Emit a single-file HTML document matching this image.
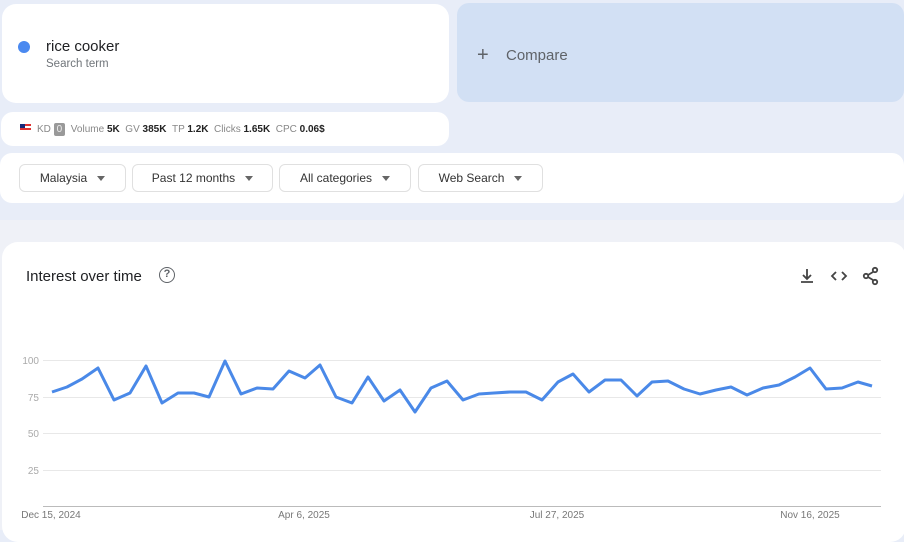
<!DOCTYPE html>
<html><head><meta charset="utf-8"><style>
*{box-sizing:border-box;margin:0;padding:0}
body{width:904px;height:530px;overflow:hidden;background:linear-gradient(#e8edf8 0,#e8edf8 220px,#eff1f7 220px);font-family:"Liberation Sans",sans-serif;position:relative}
.card{position:absolute;background:#fff;border-radius:14px}
.dd{position:absolute;top:164px;height:28px;border:1px solid #e0e0e0;border-radius:6px;font-size:12px;color:#333;display:flex;align-items:center;justify-content:center;gap:10px}
.tri{width:0;height:0;border-left:4.5px solid transparent;border-right:4.5px solid transparent;border-top:5px solid #666}
.m{color:#888}.m b{color:#222}
</style></head><body>
<div class="card" style="left:2px;top:4px;width:447px;height:99px"></div>
<div style="position:absolute;left:18px;top:41px;width:12px;height:12px;border-radius:50%;background:#4a89f0"></div>
<div style="position:absolute;left:46px;top:38px;font-size:15px;color:#202124">rice cooker</div>
<div style="position:absolute;left:46px;top:58px;font-size:11.5px;color:#70757a">Search term</div>
<div style="position:absolute;left:457px;top:3px;width:447px;height:99px;background:#d2e0f4;border-radius:12px"></div>
<div style="position:absolute;left:477px;top:44px;font-size:20px;color:#5f6368;font-weight:300">+</div>
<div style="position:absolute;left:506px;top:47px;font-size:15px;color:#5f6368">Compare</div>
<div class="card" style="left:1px;top:112px;width:448px;height:34px;border-radius:12px"></div>
<div style="position:absolute;left:20px;top:124px;width:11px;height:8px;background:repeating-linear-gradient(#d33 0 2px,#fff 2px 4px)"><div style="width:5px;height:4px;background:#14287a"></div></div>
<div class="m" style="position:absolute;left:37px;top:123px;font-size:10px;white-space:nowrap">KD <span style="display:inline-block;background:#999;color:#eee;padding:1px 3px;border-radius:2px">0</span> &nbsp;Volume <b>5K</b> &nbsp;GV <b>385K</b> &nbsp;TP <b>1.2K</b> &nbsp;Clicks <b>1.65K</b> &nbsp;CPC <b>0.06$</b></div>
<div class="card" style="left:0;top:153px;width:904px;height:50px;border-radius:12px"></div>
<div class="dd" style="left:19px;width:107px">Malaysia <span class="tri"></span></div>
<div class="dd" style="left:132px;width:141px">Past 12 months <span class="tri"></span></div>
<div class="dd" style="left:279px;width:132px">All categories <span class="tri"></span></div>
<div class="dd" style="left:418px;width:125px">Web Search <span class="tri"></span></div>
<div class="card" style="left:2px;top:242px;width:904px;height:300px;border-radius:16px"></div>
<div style="position:absolute;left:26px;top:268px;font-size:15px;color:#202124">Interest over time</div>
<div style="position:absolute;left:159px;top:267px;width:16px;height:16px;border:1.6px solid #5f6368;border-radius:50%;font-size:11px;color:#5f6368;text-align:center;line-height:13px;font-weight:bold">?</div>
<svg style="position:absolute;left:0;top:0" width="904" height="530">
<g stroke="#444" stroke-width="1.8" fill="none">
<path d="M807 269v10M803 275l4 4 4-4M801 282h12"/>
<path d="M836 272l-4 4 4 4M842 272l4 4-4 4"/>
<circle cx="875" cy="270" r="2.2"/><circle cx="866" cy="276" r="2.2"/><circle cx="875" cy="282" r="2.2"/><path d="M868 275l5-3M868 277l5 3"/>
</g>
<g stroke="#e8e8e8" stroke-width="1"><path d="M43 360.5H881M43 397.5H881M43 433.5H881M43 470.5H881"/></g>
<path d="M43 506.5H881" stroke="#bbb"/>
<g font-size="10" fill="#aaa" text-anchor="end"><text x="39" y="364">100</text><text x="39" y="401">75</text><text x="39" y="437">50</text><text x="39" y="474">25</text></g>
<g font-size="10" fill="#777" text-anchor="middle"><text x="51" y="518">Dec 15, 2024</text><text x="304" y="518">Apr 6, 2025</text><text x="557" y="518">Jul 27, 2025</text><text x="810" y="518">Nov 16, 2025</text></g>
<polyline fill="none" stroke="#4a89e8" stroke-width="3" stroke-linejoin="round" points="52,392 67,387 82,379 98,368 114,400 130,393 146,366 162,403 178,393 194,393 209,397 225,361 241,394 257,388 273,389 289,371 305,378 320,365 336,397 352,403 368,377 384,401 400,390 415,412 431,388 447,381 463,400 479,394 494,393 510,392 526,392 542,400 558,382 573,374 589,392 605,380 621,380 637,396 652,382 668,381 684,389 700,394 716,390 731,387 747,395 763,388 779,385 795,377 810,368 826,389 842,388 858,382 872,386"/>
</svg>
</body></html>
